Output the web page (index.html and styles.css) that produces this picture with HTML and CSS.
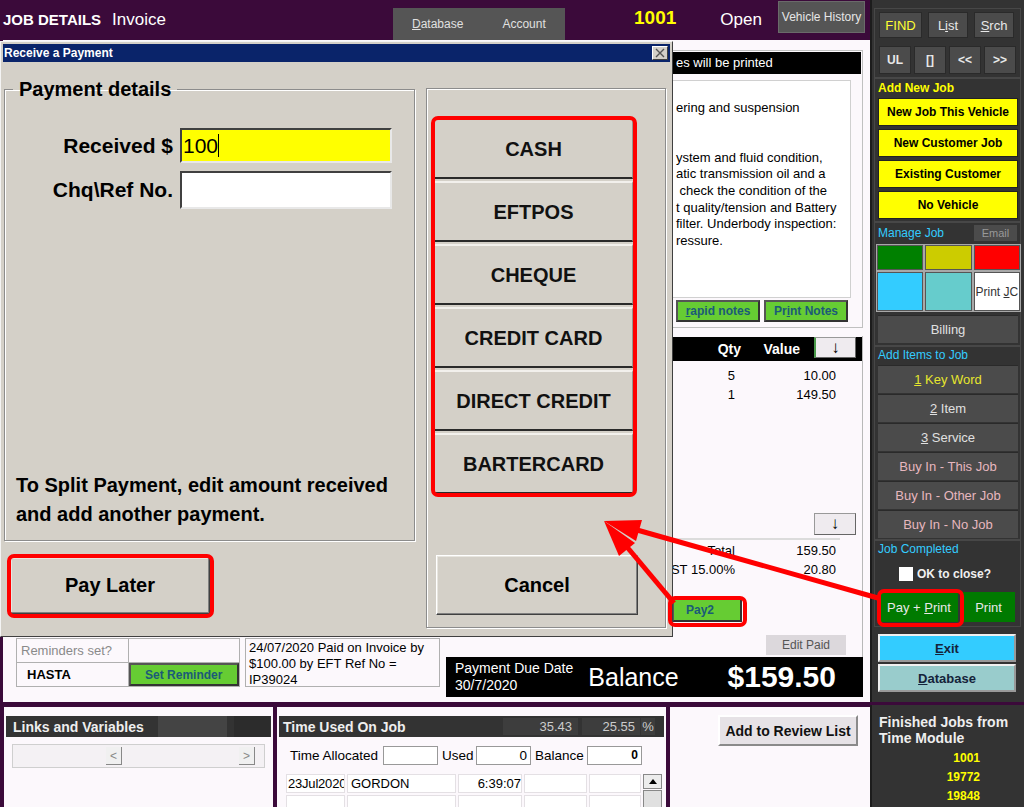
FILE: index.html
```html
<!DOCTYPE html>
<html lang="en">

<head>
    <meta charset="utf-8">
    <title>Job Details - Invoice</title>
    <meta name="viewport" content="width=device-width, initial-scale=1.0">
    <link rel="stylesheet" href="styles.css">
</head>

<body>
    <div class="app">

        <!-- Zone principale du job -->
        <main class="job">
            <header class="topbar">
                <div class="brand">
                    <span class="brand-title">JOB DETAILS</span>
                    <span class="brand-sub">Invoice</span>
                </div>
                <nav class="tabs">
                    <a href="#"><u>D</u>atabase</a>
                    <a href="#">Account</a>
                </nav>
                <span class="job-no">1001</span>
                <span class="job-status">Open</span>
                <button class="vh-btn">Vehicle History</button>
            </header>

            <div class="work">
                <!-- Colonne gauche (sous la boite de dialogue) -->
                <div class="left-col">
                    <div class="reminder-row">
                        <table class="reminders">
                            <tr>
                                <td class="rem-label">Reminders set?</td>
                                <td></td>
                            </tr>
                            <tr>
                                <td class="rem-name">HASTA</td>
                                <td class="rem-btn-cell"><button class="green-btn set-reminder">Set Reminder</button></td>
                            </tr>
                        </table>
                        <div class="pay-log">24/07/2020 Paid on Invoice by $100.00 by EFT Ref No = IP39024</div>
                    </div>
                </div>

                <!-- Colonne droite: notes, lignes, totaux -->
                <div class="right-col">
                    <div class="notes-panel">
                        <div class="notes-head">es will be printed</div>
                        <div class="notes-box">
                            <div class="note-line">ering and suspension</div>
                            <div class="note-line"></div>
                            <div class="note-line"></div>
                            <div class="note-line">ystem and fluid condition,</div>
                            <div class="note-line">atic transmission oil and a</div>
                            <div class="note-line">&nbsp;check the condition of the</div>
                            <div class="note-line">t quality/tension and Battery</div>
                            <div class="note-line">filter. Underbody inspection:</div>
                            <div class="note-line">ressure.</div>
                        </div>
                        <div class="notes-actions">
                            <button class="green-btn"><u>r</u>apid notes</button>
                            <button class="green-btn">Pr<u>i</u>nt Notes</button>
                        </div>
                    </div>

                    <div class="items-panel">
                        <div class="items-head">
                            <span class="col-qty">Qty</span>
                            <span class="col-value">Value</span>
                            <button class="arrow-btn head-arrow">&#8595;</button>
                        </div>
                        <div class="item-row"><span class="col-qty">5</span><span class="col-amount">10.00</span></div>
                        <div class="item-row"><span class="col-qty">1</span><span class="col-amount">149.50</span></div>

                        <div class="items-spacer"></div>
                        <button class="arrow-btn foot-arrow">&#8595;</button>
                        <div class="items-sep"></div>
                        <div class="total-row"><span class="total-label">Total</span><span class="col-amount">159.50</span></div>
                        <div class="total-row"><span class="total-label">GST 15.00%</span><span class="col-amount">20.80</span></div>
                        <button class="green-btn pay2">Pay2</button>
                        <button class="edit-paid">Edit Paid</button>
                    </div>

                    <div class="balance-bar">
                        <div class="due">
                            <div>Payment Due Date</div>
                            <div>30/7/2020</div>
                        </div>
                        <span class="balance-label">Balance</span>
                        <span class="balance-value">$159.50</span>
                    </div>
                </div>

                <!-- Boite de dialogue modale -->
                <div class="dialog">
                    <div class="dialog-title">
                        <span>Receive a Payment</span>
                        <span class="dialog-close">
                            <svg width="12" height="10" viewBox="0 0 12 10">
                                <path d="M2 1 L10 9 M10 1 L2 9" stroke="#555" stroke-width="1.4" />
                            </svg>
                        </span>
                    </div>
                    <div class="dialog-body">
                        <div class="dialog-left">
                            <fieldset class="pay-details">
                                <legend>Payment details</legend>
                                <div class="field-grid">
                                    <label>Received $</label>
                                    <div class="input input-yellow">100<span class="caret"></span></div>
                                    <label>Chq\Ref No.</label>
                                    <div class="input input-ref"></div>
                                </div>
                                <p class="split-note">To Split Payment, edit amount received<br>and add another payment.</p>
                            </fieldset>
                            <button class="win-btn pay-later">Pay Later</button>
                        </div>

                        <fieldset class="methods">
                            <div class="method-list">
                                <button class="method-btn">CASH</button>
                                <button class="method-btn">EFTPOS</button>
                                <button class="method-btn">CHEQUE</button>
                                <button class="method-btn">CREDIT CARD</button>
                                <button class="method-btn">DIRECT CREDIT</button>
                                <button class="method-btn">BARTERCARD</button>
                            </div>
                            <button class="win-btn cancel">Cancel</button>
                        </fieldset>
                    </div>
                </div>
            </div>
        </main>

        <!-- Barre laterale -->
        <aside class="sidebar">
            <div class="sb-group sb-nav">
                <div class="sb-row row-a">
                    <button class="sb-btn find">FIND</button>
                    <button class="sb-btn">L<u>i</u>st</button>
                    <button class="sb-btn"><u>S</u>rch</button>
                </div>
                <div class="sb-row row-b">
                    <button class="sb-btn bold">UL</button>
                    <button class="sb-btn bold">[]</button>
                    <button class="sb-btn bold">&lt;&lt;</button>
                    <button class="sb-btn bold">&gt;&gt;</button>
                </div>
            </div>

            <div class="sb-group sb-new">
                <div class="sb-label yellow">Add New Job</div>
                <div class="sb-stack gap3">
                    <button class="yellow-btn">New Job This Vehicle</button>
                    <button class="yellow-btn">New Customer Job</button>
                    <button class="yellow-btn">Existing Customer</button>
                    <button class="yellow-btn">No Vehicle</button>
                </div>
            </div>

            <div class="sb-group sb-manage">
                <div class="sb-head">
                    <span class="sb-label cyan">Manage Job</span>
                    <button class="email-btn">Email</button>
                </div>
                <div class="swatches">
                    <span class="sw sw-green"></span>
                    <span class="sw sw-olive"></span>
                    <span class="sw sw-red"></span>
                    <span class="sw sw-blue"></span>
                    <span class="sw sw-teal"></span>
                    <span class="sw sw-white"><span>Print <u>J</u>C</span></span>
                </div>
                <button class="sb-wide billing">Billing</button>
            </div>

            <div class="sb-group sb-items">
                <div class="sb-label cyan">Add Items to Job</div>
                <div class="sb-stack gap1">
                    <button class="sb-wide keyword"><u>1</u> Key Word</button>
                    <button class="sb-wide"><u>2</u> Item</button>
                    <button class="sb-wide"><u>3</u> Service</button>
                    <button class="sb-wide buyin">Buy In - This Job</button>
                    <button class="sb-wide buyin">Buy In - Other Job</button>
                    <button class="sb-wide buyin">Buy In - No Job</button>
                </div>
            </div>

            <div class="sb-group sb-done">
                <div class="sb-label cyan">Job Completed</div>
                <div class="ok-close"><span class="ok-box"></span>OK to close?</div>
                <div class="pay-row">
                    <button class="dark-green pay-print">Pay + <u>P</u>rint</button>
                    <button class="dark-green print">Print</button>
                </div>
            </div>

            <div class="sb-exit">
                <button class="exit-btn"><u>E</u>xit</button>
                <button class="exit-btn db"><u>D</u>atabase</button>
            </div>
        </aside>

        <!-- Panneaux du bas -->
        <section class="bottom">
            <div class="panel links">
                <div class="panel-head">
                    <span class="panel-title">Links and Variables</span>
                    <span class="head-block lighter"></span>
                    <span class="head-block"></span>
                </div>
                <div class="hscroll">
                    <span class="scroll-btn left-btn">&lt;</span>
                    <span class="scroll-btn right-btn">&gt;</span>
                </div>
            </div>

            <div class="panel time">
                <div class="panel-head">
                    <span class="panel-title">Time Used On Job</span>
                    <span class="num-box n1">35.43</span>
                    <span class="num-box n2">25.55</span>
                    <span class="num-box pct">%</span>
                </div>
                <div class="time-row">
                    <span>Time Allocated</span>
                    <span class="small-input"></span>
                    <span>Used</span>
                    <span class="small-input">0</span>
                    <span>Balance</span>
                    <span class="small-input bold">0</span>
                </div>
                <div class="time-grid">
                    <span class="tg c1">23Jul2020</span>
                    <span class="tg c2">GORDON</span>
                    <span class="tg c3">6:39:07</span>
                    <span class="tg c4"></span>
                    <span class="tg c5"></span>
                    <span class="vscroll"><span class="vs-up">
                        <svg width="8" height="5" viewBox="0 0 8 5"><path d="M0 5 L4 0 L8 5 Z" fill="#000" /></svg>
                    </span><span class="vs-thumb"></span></span>
                    <span class="tg c1"></span>
                    <span class="tg c2"></span>
                    <span class="tg c3"></span>
                    <span class="tg c4"></span>
                    <span class="tg c5"></span>
                </div>
            </div>

            <div class="panel review">
                <button class="review-btn">Add to Review List</button>
            </div>
        </section>

        <aside class="finished">
            <div class="finished-title">Finished Jobs from<br>Time Module</div>
            <div class="finished-list">
                <div>1001</div>
                <div>19772</div>
                <div>19848</div>
            </div>
        </aside>
    </div>

    <!-- Annotations rouges par-dessus l'ecran -->
    <div class="annotations">
        <div class="hl hl-methods"></div>
        <div class="hl hl-later"></div>
        <div class="hl hl-pay2"></div>
        <div class="hl hl-payprint"></div>
        <svg class="arrows" width="1024" height="807" viewBox="0 0 1024 807">
            <line x1="878" y1="598" x2="630" y2="528" stroke="#f00" stroke-width="5" />
            <line x1="674" y1="603" x2="622" y2="541" stroke="#f00" stroke-width="5" />
            <polygon points="604,521 642,520 636,541" fill="#f00" />
            <polygon points="604,521 635,543 619,556" fill="#f00" />
        </svg>
    </div>
</body>

</html>
```

FILE: styles.css
```css
/* Normalisation
============================================================*/

* {
    margin: 0;
    padding: 0;
    box-sizing: border-box;
}

html {
    font-family: "Liberation Sans", Arial, Helvetica, sans-serif;
    font-size: 13px;
}

body {
    width: 1024px;
    height: 807px;
    overflow: hidden;
    background-color: #3b0a3a;
    position: relative;
}

button {
    font: inherit;
    color: inherit;
    border: none;
    background: none;
    cursor: pointer;
}

a {
    color: inherit;
    text-decoration: none;
}

/* Grille generale
============================================================*/

.app {
    display: grid;
    grid-template-columns: 870px 154px;
    grid-template-rows: 702px 105px;
    height: 807px;
}

.job {
    display: flex;
    flex-direction: column;
}

/* Barre du haut
============================================================*/

.topbar {
    height: 40px;
    display: flex;
    align-items: center;
    color: white;
}

.brand {
    width: 393px;
    padding-left: 3px;
    display: flex;
    align-items: baseline;
}

.brand-title {
    font-weight: bold;
    font-size: 15px;
}

.brand-sub {
    font-size: 17px;
    margin-left: 11px;
}

.tabs {
    width: 172px;
    height: 32px;
    margin-top: 8px;
    background-color: #555;
    display: flex;
    align-items: center;
    font-size: 12px;
    color: #e0e0e0;
}

.tabs a:first-child {
    margin-left: 19px;
}

.tabs a:last-child {
    margin-left: 39px;
}

.job-no {
    margin-left: 69px;
    margin-top: -4px;
    font-size: 19px;
    font-weight: bold;
    color: #ffff00;
}

.job-status {
    margin-left: 44px;
    font-size: 17px;
}

.vh-btn {
    margin-left: auto;
    margin-right: 5px;
    margin-top: -6px;
    width: 87px;
    height: 32px;
    background-color: #555;
    border: 1px solid #6a6a6a;
    font-size: 12px;
    color: #e6e6e6;
}

/* Zone de travail
============================================================*/

.work {
    position: relative;
    flex-grow: 1;
    margin-left: 3px;
    background-color: #fcf8fc;
    display: flex;
}

.left-col {
    width: 443px;
    display: flex;
    flex-direction: column;
    justify-content: flex-end;
    padding: 0 0 15px 13px;
}

.reminder-row {
    display: flex;
    gap: 5px;
    height: 49px;
}

.reminders {
    width: 224px;
    border-collapse: collapse;
    font-size: 13px;
}

.reminders td {
    border: 1px solid #b0b0b0;
    width: 112px;
    height: 24px;
}

.rem-label {
    color: #8a8a8a;
    padding-left: 4px;
}

.rem-name {
    font-weight: bold;
    padding-left: 10px;
}

.reminders .rem-btn-cell {
    padding: 0;
}

.set-reminder {
    width: 100%;
    height: 100%;
}

.pay-log {
    width: 195px;
    border: 1px solid #b0b0b0;
    padding: 1px 3px;
    font-size: 13px;
    line-height: 16px;
    overflow: hidden;
}

.green-btn {
    background-color: #66cc33;
    border: 2px solid #555;
    border-right-color: #333;
    border-bottom-color: #333;
    color: #1b5a78;
    font-weight: bold;
    font-size: 12px;
}

/* Colonne droite
============================================================*/

.right-col {
    width: 417px;
    padding-top: 10px;
    display: flex;
    flex-direction: column;
}

.notes-panel {
    height: 278px;
    border: 1px solid #c0c0c0;
    padding: 1px;
    display: flex;
    flex-direction: column;
}

.notes-head {
    height: 22px;
    background-color: black;
    color: white;
    padding-left: 228px;
    line-height: 22px;
}

.notes-box {
    height: 218px;
    margin: 6px 10px 0 0;
    background-color: white;
    border: 1px solid #d0d0d0;
    padding: 19px 0 0 227px;
    overflow: hidden;
}

.note-line {
    height: 16.6px;
    line-height: 16.6px;
    white-space: nowrap;
}

.notes-actions {
    margin: 2px 13px 0 0;
    display: flex;
    justify-content: flex-end;
    gap: 4px;
}

.notes-actions .green-btn {
    width: 84px;
    height: 22px;
}

.items-panel {
    height: 321px;
    margin-top: 8px;
    padding-top: 1px;
    border-right: 1px solid #b8b8b8;
    display: flex;
    flex-direction: column;
}

.items-head {
    height: 24px;
    background-color: black;
    color: white;
    font-weight: bold;
    font-size: 14px;
    display: flex;
    align-items: center;
}

.items-head .col-qty {
    margin-left: auto;
}

.col-qty {
    width: 45px;
    text-align: right;
}

.col-value {
    width: 59px;
    text-align: right;
}

.arrow-btn {
    width: 42px;
    height: 22px;
    background-color: #efebef;
    border: 1px solid #999;
    border-right-color: #666;
    border-bottom-color: #666;
    font-size: 17px;
    font-weight: bold;
    line-height: 18px;
    color: black;
}

.head-arrow {
    margin: -3px 6px 0 14px;
    height: 21px;
    border-left: 2px solid #4a9a4a;
}

.item-row,
.total-row {
    display: flex;
    height: 19px;
    line-height: 19px;
    padding-right: 26px;
}

.items-head+.item-row {
    margin-top: 5px;
}

.item-row .col-qty {
    width: 289px;
}

.col-amount {
    margin-left: auto;
    text-align: right;
}

.items-spacer {
    flex-grow: 1;
}

.foot-arrow {
    align-self: flex-end;
    margin-right: 6px;
}

.items-sep {
    height: 2px;
    margin: 3px 22px 0 0;
    background-color: #dcdcdc;
}

.items-sep+.total-row {
    margin-top: 1px;
}

.total-label {
    width: 289px;
    text-align: right;
}

.pay2 {
    width: 70px;
    height: 24px;
    margin: 19px 0 0 226px;
    text-align: left;
    padding-left: 12px;
}

.edit-paid {
    width: 80px;
    height: 20px;
    margin: 13px 0 2px 320px;
    background-color: #dcd8dc;
    color: #555;
    font-size: 12px;
}

.balance-bar {
    height: 40px;
    background-color: black;
    color: white;
    display: flex;
    align-items: center;
    padding: 0 27px 0 9px;
}

.due {
    font-size: 14px;
    line-height: 17px;
}

.balance-label {
    margin-left: 15px;
    font-size: 25px;
}

.balance-value {
    margin-left: auto;
    font-size: 30px;
    font-weight: bold;
}

/* Boite de dialogue "Receive a Payment"
============================================================*/

.dialog {
    position: absolute;
    left: -3px;
    top: 1px;
    width: 673px;
    height: 596px;
    padding: 2px;
    background-color: #d4d0c8;
    border: 1px solid;
    border-color: #f4f4f4 #404040 #404040 #f4f4f4;
    display: flex;
    flex-direction: column;
}

.dialog-title {
    height: 18px;
    background-color: #0a246a;
    color: white;
    font-size: 12px;
    font-weight: bold;
    display: flex;
    align-items: center;
    padding-left: 1px;
}

.dialog-close {
    margin-left: auto;
    margin-right: 2px;
    width: 16px;
    height: 14px;
    background-color: #d4d0c8;
    border: 1px solid;
    border-color: #fff #404040 #404040 #fff;
    display: flex;
    align-items: center;
    justify-content: center;
}

.dialog-body {
    flex-grow: 1;
    display: flex;
    gap: 11px;
    padding: 17px 0 0 1px;
}

.dialog-left {
    width: 411px;
    display: flex;
    flex-direction: column;
}

fieldset {
    min-inline-size: 0;
    border: 1px solid #8c8c8c;
    box-shadow: 1px 1px 0 #fff, inset 1px 1px 0 #fff;
}

.pay-details {
    height: 462px;
}

.pay-details legend {
    margin-left: 8px;
    padding: 0 6px;
    font-size: 20px;
    font-weight: bold;
    line-height: 21px;
}

.field-grid {
    margin-top: 28px;
    display: grid;
    grid-template-columns: 168px 212px;
    grid-template-rows: 35px 38px;
    column-gap: 7px;
    row-gap: 8px;
    align-items: center;
}

.field-grid label {
    text-align: right;
    font-size: 21px;
    font-weight: bold;
}

.input {
    height: 100%;
    background-color: white;
    border: 2px solid;
    border-color: #404040 #e8e8e8 #e8e8e8 #404040;
    font-size: 21px;
    padding-left: 1px;
    display: flex;
    align-items: center;
}

.input-yellow {
    background-color: #ffff00;
}

.caret {
    width: 1px;
    height: 23px;
    background-color: black;
}

.split-note {
    margin-top: 262px;
    padding-left: 11px;
    font-size: 20px;
    font-weight: bold;
    line-height: 29px;
}

.win-btn {
    background-color: #d4d0c8;
    border: 1px solid;
    border-color: #fff #404040 #404040 #fff;
    box-shadow: inset -1px -1px #808080, inset 1px 1px #e8e6e0;
    font-size: 20px;
    font-weight: bold;
    color: black;
}

.pay-later {
    width: 200px;
    height: 57px;
    margin: 16px 0 0 6px;
}

.methods {
    width: 240px;
    height: 540px;
    margin-top: 9px;
    padding: 29px 0 0 7px;
    display: flex;
    flex-direction: column;
}

.method-list {
    display: flex;
    flex-direction: column;
    gap: 2px;
}

.method-btn {
    width: 199px;
    height: 61px;
    padding-top: 2px;
    background-color: #d4d0c8;
    border-top: 2px solid #f2f0ec;
    border-left: 1px solid #f2f0ec;
    border-right: 1px solid #9a978f;
    border-bottom: 2px solid #2a2a2a;
    font-size: 20px;
    font-weight: bold;
    color: #111;
}

.cancel {
    width: 202px;
    height: 60px;
    margin: 61px 0 0 2px;
}

/* Barre laterale
============================================================*/

.sidebar {
    background-color: #333;
    border-left: 2px solid #1c1c1c;
    padding: 8px 3px 0 2px;
    display: flex;
    flex-direction: column;
    color: #e0e0e0;
}

.sb-group {
    border: 1px solid #474747;
    padding: 2px 2px 2px 3px;
}

.sb-nav {
    padding: 3px 4px 3px 4px;
}

.sb-items {
    padding-top: 1px;
    padding-bottom: 1px;
}

.sb-done {
    padding-top: 1px;
    padding-bottom: 4px;
}

.sb-row {
    display: flex;
}

.row-a {
    height: 26px;
    gap: 6px;
}

.row-b {
    height: 28px;
    margin-top: 8px;
    gap: 3px;
}

.sb-btn {
    background-color: #4b4b4b;
    border: 1px solid #2a2a2a;
    font-size: 13px;
    color: #e8e8e8;
}

.row-a .sb-btn {
    width: 40px;
}

.row-a .find {
    width: 43px;
    color: #ffff33;
}

.row-b .sb-btn {
    width: 32px;
}

.bold {
    font-weight: bold;
    font-size: 12px;
}

.sb-label {
    font-size: 12px;
    line-height: 15px;
}

.yellow {
    color: #ffff00;
    font-weight: bold;
}

.cyan {
    color: #33ccff;
}

.sb-stack {
    display: flex;
    flex-direction: column;
    margin-top: 2px;
}

.sb-items .sb-stack {
    margin-top: 2px;
}

.gap3 {
    gap: 3px;
}

.gap1 {
    gap: 1px;
}

.yellow-btn {
    width: 140px;
    height: 28px;
    background-color: #ffff00;
    border: 1px solid #222;
    color: black;
    font-weight: bold;
    font-size: 12px;
}

.sb-head {
    height: 16px;
    display: flex;
    justify-content: space-between;
    align-items: center;
    padding-right: 1px;
}

.email-btn {
    width: 43px;
    height: 16px;
    background-color: #4b4b4b;
    color: #999;
    font-size: 11px;
}

.swatches {
    margin: 3px 0 0 -2px;
    width: 145px;
    height: 68px;
    display: grid;
    grid-template-columns: repeat(3, 1fr);
    gap: 2px;
    padding: 1px;
    background-color: #a8a8a8;
}

.sw {
    border: 1px solid #555;
    font-size: 12px;
    color: #333;
    display: flex;
    align-items: center;
    justify-content: center;
}

.sw-green {
    background-color: #008000;
}

.sw-olive {
    background-color: #cccc00;
}

.sw-red {
    background-color: #ff0000;
}

.sw-blue {
    background-color: #33ccff;
}

.sw-teal {
    background-color: #66cccc;
}

.sw-white {
    background-color: white;
}

.sb-wide {
    width: 140px;
    height: 28px;
    background-color: #4b4b4b;
    border-top: 1px solid #2a2a2a;
    font-size: 13px;
    color: #e0e0e0;
}

.billing {
    margin-top: 3px;
}

.keyword {
    color: #e6e62e;
}

.buyin {
    color: #e7b7bf;
}

.ok-close {
    margin-top: 9px;
    height: 16px;
    display: flex;
    align-items: center;
    gap: 4px;
    padding-left: 21px;
    font-weight: bold;
    font-size: 12px;
    color: #f0f0f0;
}

.ok-box {
    width: 14px;
    height: 14px;
    background-color: white;
}

.pay-row {
    margin-top: 10px;
    display: flex;
    gap: 4px;
    padding-left: 2px;
}

.dark-green {
    height: 30px;
    background-color: #007a00;
    color: #e8e8e8;
    font-size: 13px;
}

.pay-print {
    width: 78px;
}

.print {
    width: 53px;
}

.sb-exit {
    margin-top: 7px;
    padding-left: 4px;
    display: flex;
    flex-direction: column;
    gap: 2px;
}

.exit-btn {
    width: 138px;
    height: 28px;
    background-color: #33ccff;
    border: 2px solid #f0f0f0;
    border-right-color: #999;
    border-bottom-color: #999;
    color: #15233a;
    font-weight: bold;
    font-size: 13px;
}

.exit-btn.db {
    background-color: #99cccc;
}

/* Panneaux du bas
============================================================*/

.bottom {
    padding-top: 5px;
    display: flex;
    gap: 4px;
    padding-left: 4px;
}

.panel {
    background-color: #fcf8fc;
    height: 100px;
}

.links {
    width: 269px;
}

.time {
    width: 389px;
}

.review {
    width: 200px;
}

.panel-head {
    margin: 9px 2px 0 2px;
    height: 21px;
    background-color: #333;
    display: flex;
    align-items: center;
}

.panel-title {
    padding-left: 4px;
    font-weight: bold;
    font-size: 14px;
    color: #eee;
}

.links .panel-title {
    padding-left: 7px;
}

.head-block {
    height: 21px;
    width: 36px;
    margin-left: 7px;
    background-color: #2c2c2c;
}

.head-block.lighter {
    width: 69px;
    margin-left: 14px;
    background-color: #444;
}

.hscroll {
    margin: 7px 8px 0 8px;
    height: 24px;
    background-color: #f4f1f4;
    border: 1px solid #cfcfcf;
    position: relative;
}

.scroll-btn {
    position: absolute;
    top: 2px;
    width: 16px;
    height: 18px;
    background-color: #f0f0f0;
    border-right: 1px solid #888;
    border-bottom: 1px solid #888;
    color: #888;
    font-size: 12px;
    text-align: center;
    line-height: 18px;
}

.left-btn {
    left: 93px;
}

.right-btn {
    left: 226px;
}

.num-box {
    height: 17px;
    line-height: 17px;
    background-color: #3d3d3d;
    color: #ccc;
    font-size: 13px;
    text-align: right;
}

.num-box.n1 {
    margin-left: auto;
    width: 75px;
    padding-right: 6px;
}

.num-box.n2 {
    width: 58px;
    margin-left: 4px;
    padding-right: 5px;
}

.num-box.pct {
    width: 14px;
    margin: 0 9px 0 1px;
    text-align: center;
}

.time-row {
    margin: 9px 0 0 13px;
    display: grid;
    grid-template-columns: 89px 55px 30px 55px 48px 55px;
    column-gap: 4px;
    align-items: center;
    font-size: 13.5px;
    white-space: nowrap;
}

.small-input {
    height: 19px;
    border: 1px solid #999;
    background-color: white;
    text-align: right;
    padding-right: 3px;
    line-height: 17px;
}

.small-input.bold {
    font-weight: bold;
}

.time-grid {
    margin: 9px 0 0 9px;
    display: grid;
    grid-template-columns: 59px 109px 64px 63px 52px 19px;
    grid-template-rows: 19px 14px;
    column-gap: 2px;
    row-gap: 2px;
    font-size: 13px;
}

.tg {
    border: 1px solid #e4e0e4;
    background-color: white;
    padding-left: 3px;
    white-space: nowrap;
    overflow: hidden;
    line-height: 17px;
}

.tg.c1 {
    padding-left: 1px;
    letter-spacing: -0.2px;
}

.tg.c3 {
    text-align: right;
}

.vscroll {
    grid-row: span 2;
    display: flex;
    flex-direction: column;
}

.vs-up {
    height: 15px;
    background-color: #ececec;
    border: 1px solid #888;
    display: flex;
    align-items: center;
    justify-content: center;
}

.vs-thumb {
    flex-grow: 1;
    margin-top: 1px;
    background-color: #e0e0e0;
    border: 1px solid #888;
}

.review-btn {
    margin: 8px 0 0 48px;
    width: 140px;
    height: 31px;
    background-color: #e6e2e6;
    border: 2px solid;
    border-color: #fff #8a8a8a #8a8a8a #fff;
    font-weight: bold;
    font-size: 14px;
    color: #111;
}

.finished {
    margin-top: 3px;
    background-color: #333;
    border-left: 2px solid #1c1c1c;
    padding: 9px 0 0 7px;
}

.finished-title {
    font-weight: bold;
    font-size: 14px;
    line-height: 16px;
    color: #eee;
}

.finished-list {
    margin-top: 3px;
    width: 101px;
    text-align: right;
    color: #ffff00;
    font-weight: bold;
    font-size: 12px;
    line-height: 19px;
}

/* Annotations rouges
============================================================*/

.annotations {
    position: absolute;
    inset: 0;
    pointer-events: none;
}

.hl {
    position: absolute;
    border: 4px solid #f00;
    border-radius: 7px;
}

.hl-methods {
    left: 431px;
    top: 116px;
    width: 206px;
    height: 381px;
}

.hl-later {
    left: 7px;
    top: 554px;
    width: 207px;
    height: 64px;
}

.hl-pay2 {
    left: 668px;
    top: 596px;
    width: 79px;
    height: 31px;
}

.hl-payprint {
    left: 877px;
    top: 589px;
    width: 87px;
    height: 38px;
}

.arrows {
    position: absolute;
    left: 0;
    top: 0;
}
```
